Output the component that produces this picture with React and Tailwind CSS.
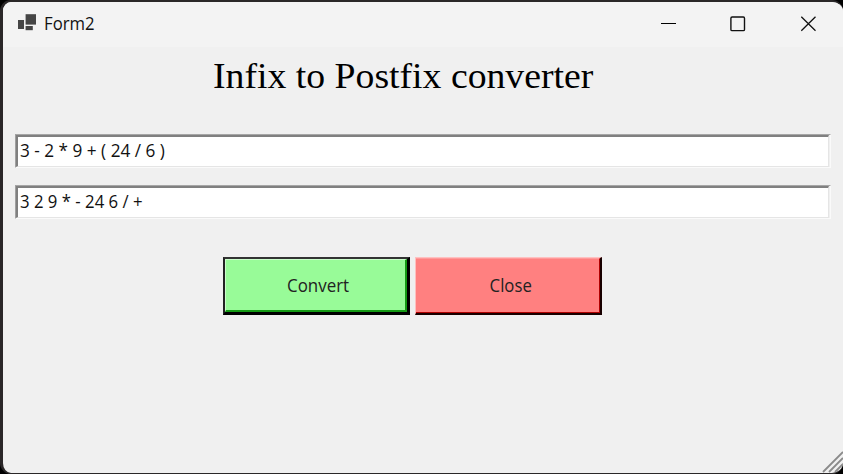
import React from "react";

const sans = "font-['Open_Sans','Noto_Sans',sans-serif]";

function TitleBar() {
  return (
    <header className="flex h-[45px] shrink-0 items-center bg-[#f3f3f3] pl-[15px]">
      <svg width="19" height="18" viewBox="0 0 19 18" fill="#454545" className="mb-[3px] shrink-0">
        <rect x="0" y="6" width="6" height="9" />
        <rect x="7.6" y="0.2" width="10.4" height="10.4" />
        <rect x="7.6" y="12" width="7.2" height="4.2" />
      </svg>
      <span className={`${sans} ml-[7px] mb-[4px] origin-left scale-x-[0.93] text-[18px] leading-6 text-[#111]`}>
        Form2
      </span>
      <div className="mb-[2px] ml-auto flex items-center">
        <button aria-label="Minimize" className="flex h-[43px] w-[70px] items-center justify-center">
          <svg width="16" height="16" stroke="#000" fill="none" shapeRendering="crispEdges">
            <path d="M1 7.5H16" />
          </svg>
        </button>
        <button aria-label="Maximize" className="flex h-[43px] w-[70px] items-center justify-center">
          <svg width="16" height="16" stroke="#111" strokeWidth="1.4" fill="none">
            <rect x="0.9" y="1" width="13.6" height="13.6" rx="1.2" />
          </svg>
        </button>
        <button aria-label="Close window" className="flex h-[43px] w-[70px] items-center justify-center">
          <svg width="16" height="16" stroke="#111" strokeWidth="1.3" fill="none">
            <path d="M1.3 0.7L15.5 14.7M15.5 0.7L1.3 14.7" />
          </svg>
        </button>
      </div>
    </header>
  );
}

function Field({ children, scale }) {
  return (
    <div className="h-[34px] w-[816px] border border-t-[#a6a6a6] border-l-[#a0a0a0] border-r-[#fafafa] border-b-[#fafafa]">
      <div className="mr-px h-full border-t-2 border-l-2 border-r border-b border-t-[#808080] border-l-[#808080] border-r-[#e5e5e5] border-b-[#e5e5e5] bg-white pl-[2px]">
        <span className={`${sans} ${scale} inline-block origin-left whitespace-pre text-[18px] leading-[26px] text-[#111]`}>
          {children}
        </span>
      </div>
    </div>
  );
}

export default function App() {
  return (
    <div className="h-[474px] w-[843px] overflow-hidden bg-black">
      <div className="relative flex h-[474px] w-[843px] flex-col overflow-hidden rounded-[11px] border-t-2 border-b border-l-[3px] border-[#2a2728] bg-[#f0f0f0]">
        <TitleBar />
        <main className="flex flex-1 flex-col">
          <h1 className="ml-[210px] mt-[7px] h-[44px] whitespace-nowrap font-['Liberation_Serif',serif] text-[36px] leading-[44px] text-black">
            <span className="inline-block origin-left scale-x-[1.048]">Infix to Postfix converter</span>
          </h1>
          <div className="ml-[12px] mt-[36px] flex flex-col gap-[17px]">
            <Field scale="scale-x-[0.955]">3 - 2 * 9 + ( 24 / 6 )</Field>
            <Field scale="scale-x-[0.93]">3 2 9 * - 24 6 / +</Field>
          </div>
          <div className="ml-[220px] mt-[38px] flex gap-[5px]">
            <button className="h-[58px] w-[187px] border-t-2 border-l-2 border-r-[3px] border-b-[3px] border-t-[#333] border-l-[#222] border-r-black border-b-black">
              <span className="flex h-full items-center justify-center border-t border-l border-r-2 border-b-2 border-t-[#ccfdcc] border-l-[#ccfdcc] border-r-[#159a15] border-b-[#159a15] bg-[#98fb98] pl-[5px]">
                <span className={`${sans} scale-x-[0.94] text-[18px] leading-6 text-[#222]`}>Convert</span>
              </span>
            </button>
            <button className="h-[58px] w-[187px] border-t border-l border-r-2 border-b-2 border-t-[#ffc0c0] border-l-[#ffc0c0] border-r-[#180000] border-b-[#180000]">
              <span className="flex h-full items-center justify-center border-t border-r border-b border-t-[#ff9a9a] border-r-[#b00000] border-b-[#b00000] bg-[#ff8080] pb-[2px] pl-[6px]">
                <span className={`${sans} scale-x-[0.93] text-[18px] leading-6 text-[#222]`}>Close</span>
              </span>
            </button>
          </div>
        </main>
        <svg width="22" height="22" stroke="#8a8a8a" strokeWidth="1.8" className="absolute right-0 bottom-0">
          <path d="M2 21L22 1M8 21L22 7M14 21L22 13" />
        </svg>
      </div>
    </div>
  );
}
